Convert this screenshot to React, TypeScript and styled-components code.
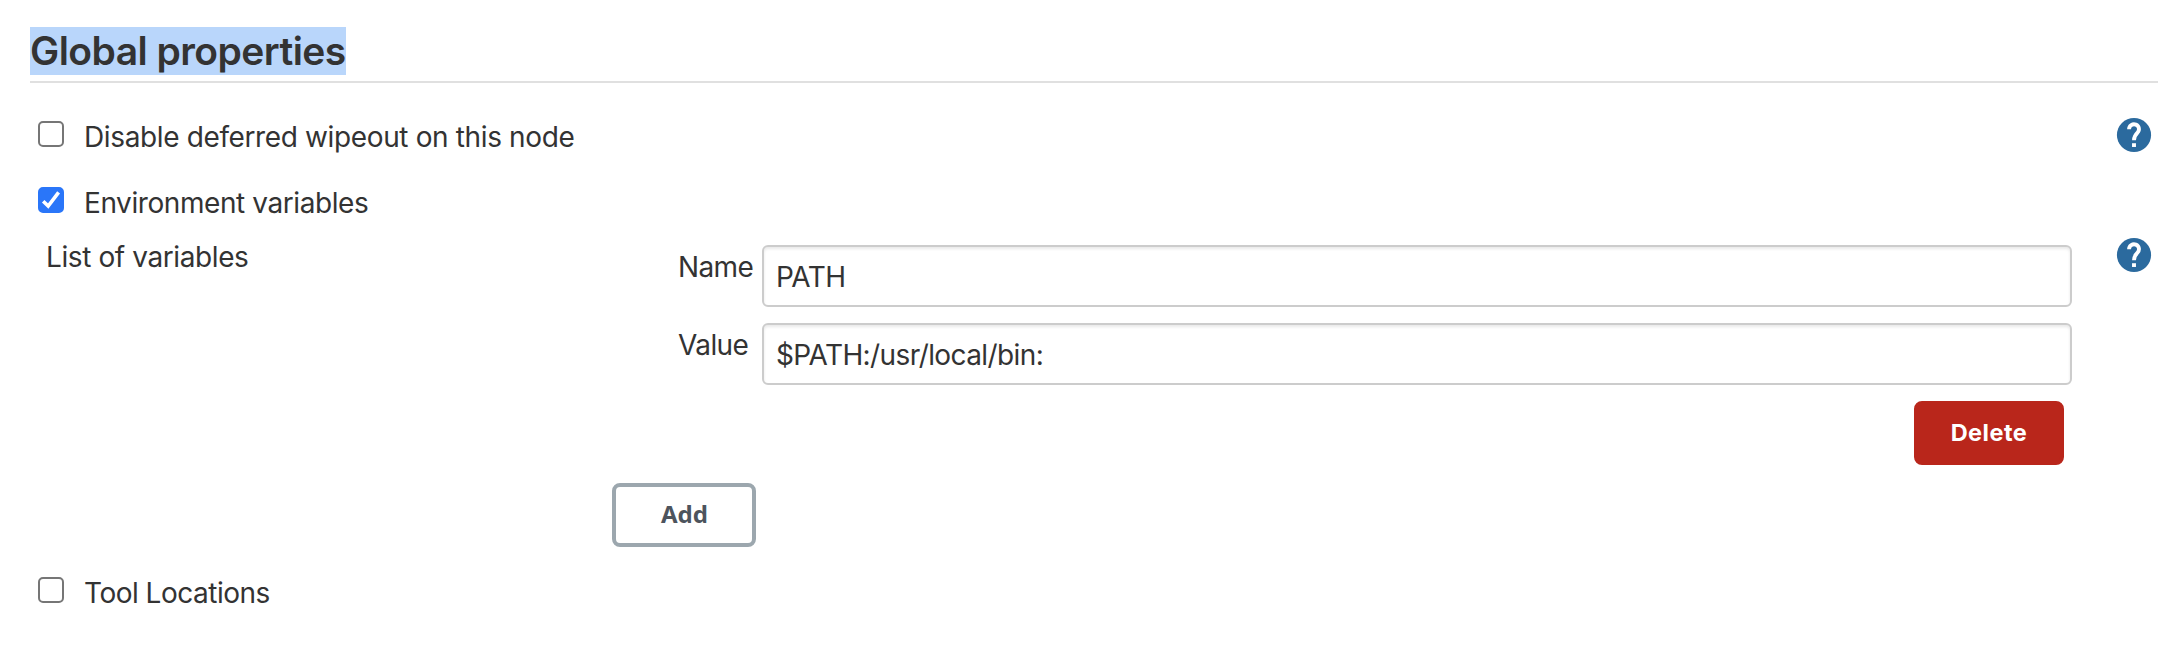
import React, { useState } from "react";
import styled, { createGlobalStyle } from "styled-components";

const GlobalStyle = createGlobalStyle`
  *, *::before, *::after { box-sizing: border-box; }
  body {
    margin: 0;
    background: #fff;
    color: #333;
    font-family: Inter, "Liberation Sans", sans-serif;
    font-size: 28px;
    line-height: 40px;
  }
`;

const Page = styled.main`
  display: flex;
  flex-direction: column;
  min-height: 652px;
  padding: 27px 20px 0 30px;
`;

const SectionHeader = styled.header`
  height: 56px;
  border-bottom: 2px solid #e0e0e0;
`;

const SectionTitle = styled.h2`
  display: inline-block;
  width: 316px;
  height: 48px;
  margin: 0;
  background: #b9d6fb;
  font-size: 39px;
  font-weight: 600;
  line-height: 48px;
  letter-spacing: -0.55px;
  white-space: nowrap;
`;

const OptionRow = styled.div<{ $top: number }>`
  display: flex;
  align-items: flex-start;
  justify-content: space-between;
  height: 40px;
  margin-top: ${(p) => p.$top}px;
  padding: 0 4px 0 8px;
`;

const OptionLabel = styled.label<{ $tracking: number }>`
  display: flex;
  align-items: flex-start;
  gap: 20px;
  letter-spacing: ${(p) => p.$tracking}px;
  white-space: nowrap;
`;

const Checkbox = styled.input`
  appearance: none;
  flex: none;
  width: 26px;
  height: 26px;
  margin: 4px 0 0;
  border: 2px solid #767676;
  border-radius: 5px;
  background: #fff;

  &:checked {
    border-color: #2a76f9;
    background: #2a76f9
      url("data:image/svg+xml,%3Csvg xmlns='http://www.w3.org/2000/svg' viewBox='0 0 26 26'%3E%3Cpath d='M5.2 14.2 10.2 19 20.6 5.4' fill='none' stroke='white' stroke-width='3.6'/%3E%3C/svg%3E")
      center / 26px 26px no-repeat;
  }
`;

const HelpButton = styled.button`
  display: flex;
  flex: none;
  width: 40px;
  height: 40px;
  margin: -2px 0 0;
  padding: 0;
  border: 0;
  background: none;
  color: #2b6a9e;
  align-items: center;
  justify-content: center;

  svg {
    flex: none;
    width: 40px;
    height: 40px;
  }
`;

const VariablesBlock = styled.div`
  display: flex;
  align-items: flex-start;
  height: 310px;
  margin-top: 14px;
  padding: 0 4px 0 16px;
`;

const BlockTitle = styled.div`
  width: 566px;
  letter-spacing: -0.4px;
`;

const VariableList = styled.div`
  display: flex;
  flex-direction: column;
  width: 1460px;
  margin-right: auto;
  padding-top: 8px;
`;

const Field = styled.label`
  display: flex;
  height: 62px;
  margin: 0 0 16px 66px;
`;

const FieldName = styled.span`
  width: 84px;
  padding-top: 2px;
  letter-spacing: -0.6px;
`;

const TextInput = styled.input<{ $tracking: number }>`
  flex: 1;
  min-width: 0;
  height: 62px;
  padding: 2px 12px 0;
  border: 2px solid #ccc;
  border-radius: 6px;
  background: #fff;
  box-shadow: inset 0 2px 3px rgba(0, 0, 0, 0.09);
  color: #333;
  font: inherit;
  letter-spacing: ${(p) => p.$tracking}px;
  outline: 0;
`;

const Button = styled.button`
  height: 64px;
  border: 4px solid;
  border-radius: 8px;
  font-size: 24px;
  font-weight: 700;
  line-height: 32px;
`;

const DeleteButton = styled(Button)`
  align-self: flex-end;
  width: 150px;
  margin: 0 8px 18px 0;
  padding: 0 0 1px;
  border-color: #b9261b;
  background: #b9261b;
  color: #fff;
  font-family: Inter, sans-serif;
  font-size: 23.5px;
  letter-spacing: 0.5px;
`;

const AddButton = styled(Button)`
  align-self: flex-start;
  width: 144px;
  margin: 0;
  padding: 0 0 3px 1px;
  border-color: #9ca7ae;
  background: #fff;
  color: #4d545d;
  font-family: "Noto Sans", sans-serif;
`;

function Help() {
  return (
    <HelpButton type="button" aria-label="Help">
      <svg viewBox="0.3 0.3 23.4 23.4">
        <circle cx="12" cy="12" r="10" fill="currentColor" />
        <path
          d="M9.1 8.6a2.9 2.9 0 1 1 4.95 2.05C12.7 12 12 12.8 12 15"
          fill="none"
          stroke="#fff"
          strokeWidth="2.25"
        />
        <rect x="10.85" y="16.8" width="2.3" height="2.2" fill="#fff" />
      </svg>
    </HelpButton>
  );
}

function Option({ text, top, tracking, checked = false, help = false }: {
  text: string;
  top: number;
  tracking: number;
  checked?: boolean;
  help?: boolean;
}) {
  const [on, setOn] = useState(checked);
  return (
    <OptionRow $top={top}>
      <OptionLabel $tracking={tracking}>
        <Checkbox type="checkbox" checked={on} onChange={() => setOn(!on)} />
        <span>{text}</span>
      </OptionLabel>
      {help && <Help />}
    </OptionRow>
  );
}

export default function App() {
  return (
    <>
      <GlobalStyle />
      <Page>
        <SectionHeader>
          <SectionTitle>Global properties</SectionTitle>
        </SectionHeader>
        <Option text="Disable deferred wipeout on this node" top={34} tracking={-0.37} help />
        <Option text="Environment variables" top={26} tracking={-0.42} checked />
        <VariablesBlock>
          <BlockTitle>List of variables</BlockTitle>
          <VariableList>
            <Field>
              <FieldName>Name</FieldName>
              <TextInput $tracking={-0.5} defaultValue="PATH" spellCheck={false} />
            </Field>
            <Field>
              <FieldName>Value</FieldName>
              <TextInput $tracking={-0.6} defaultValue="$PATH:/usr/local/bin:" spellCheck={false} />
            </Field>
            <DeleteButton type="button">Delete</DeleteButton>
            <AddButton type="button">Add</AddButton>
          </VariableList>
          <Help />
        </VariablesBlock>
        <Option text="Tool Locations" top={26} tracking={-0.5} />
      </Page>
    </>
  );
}
